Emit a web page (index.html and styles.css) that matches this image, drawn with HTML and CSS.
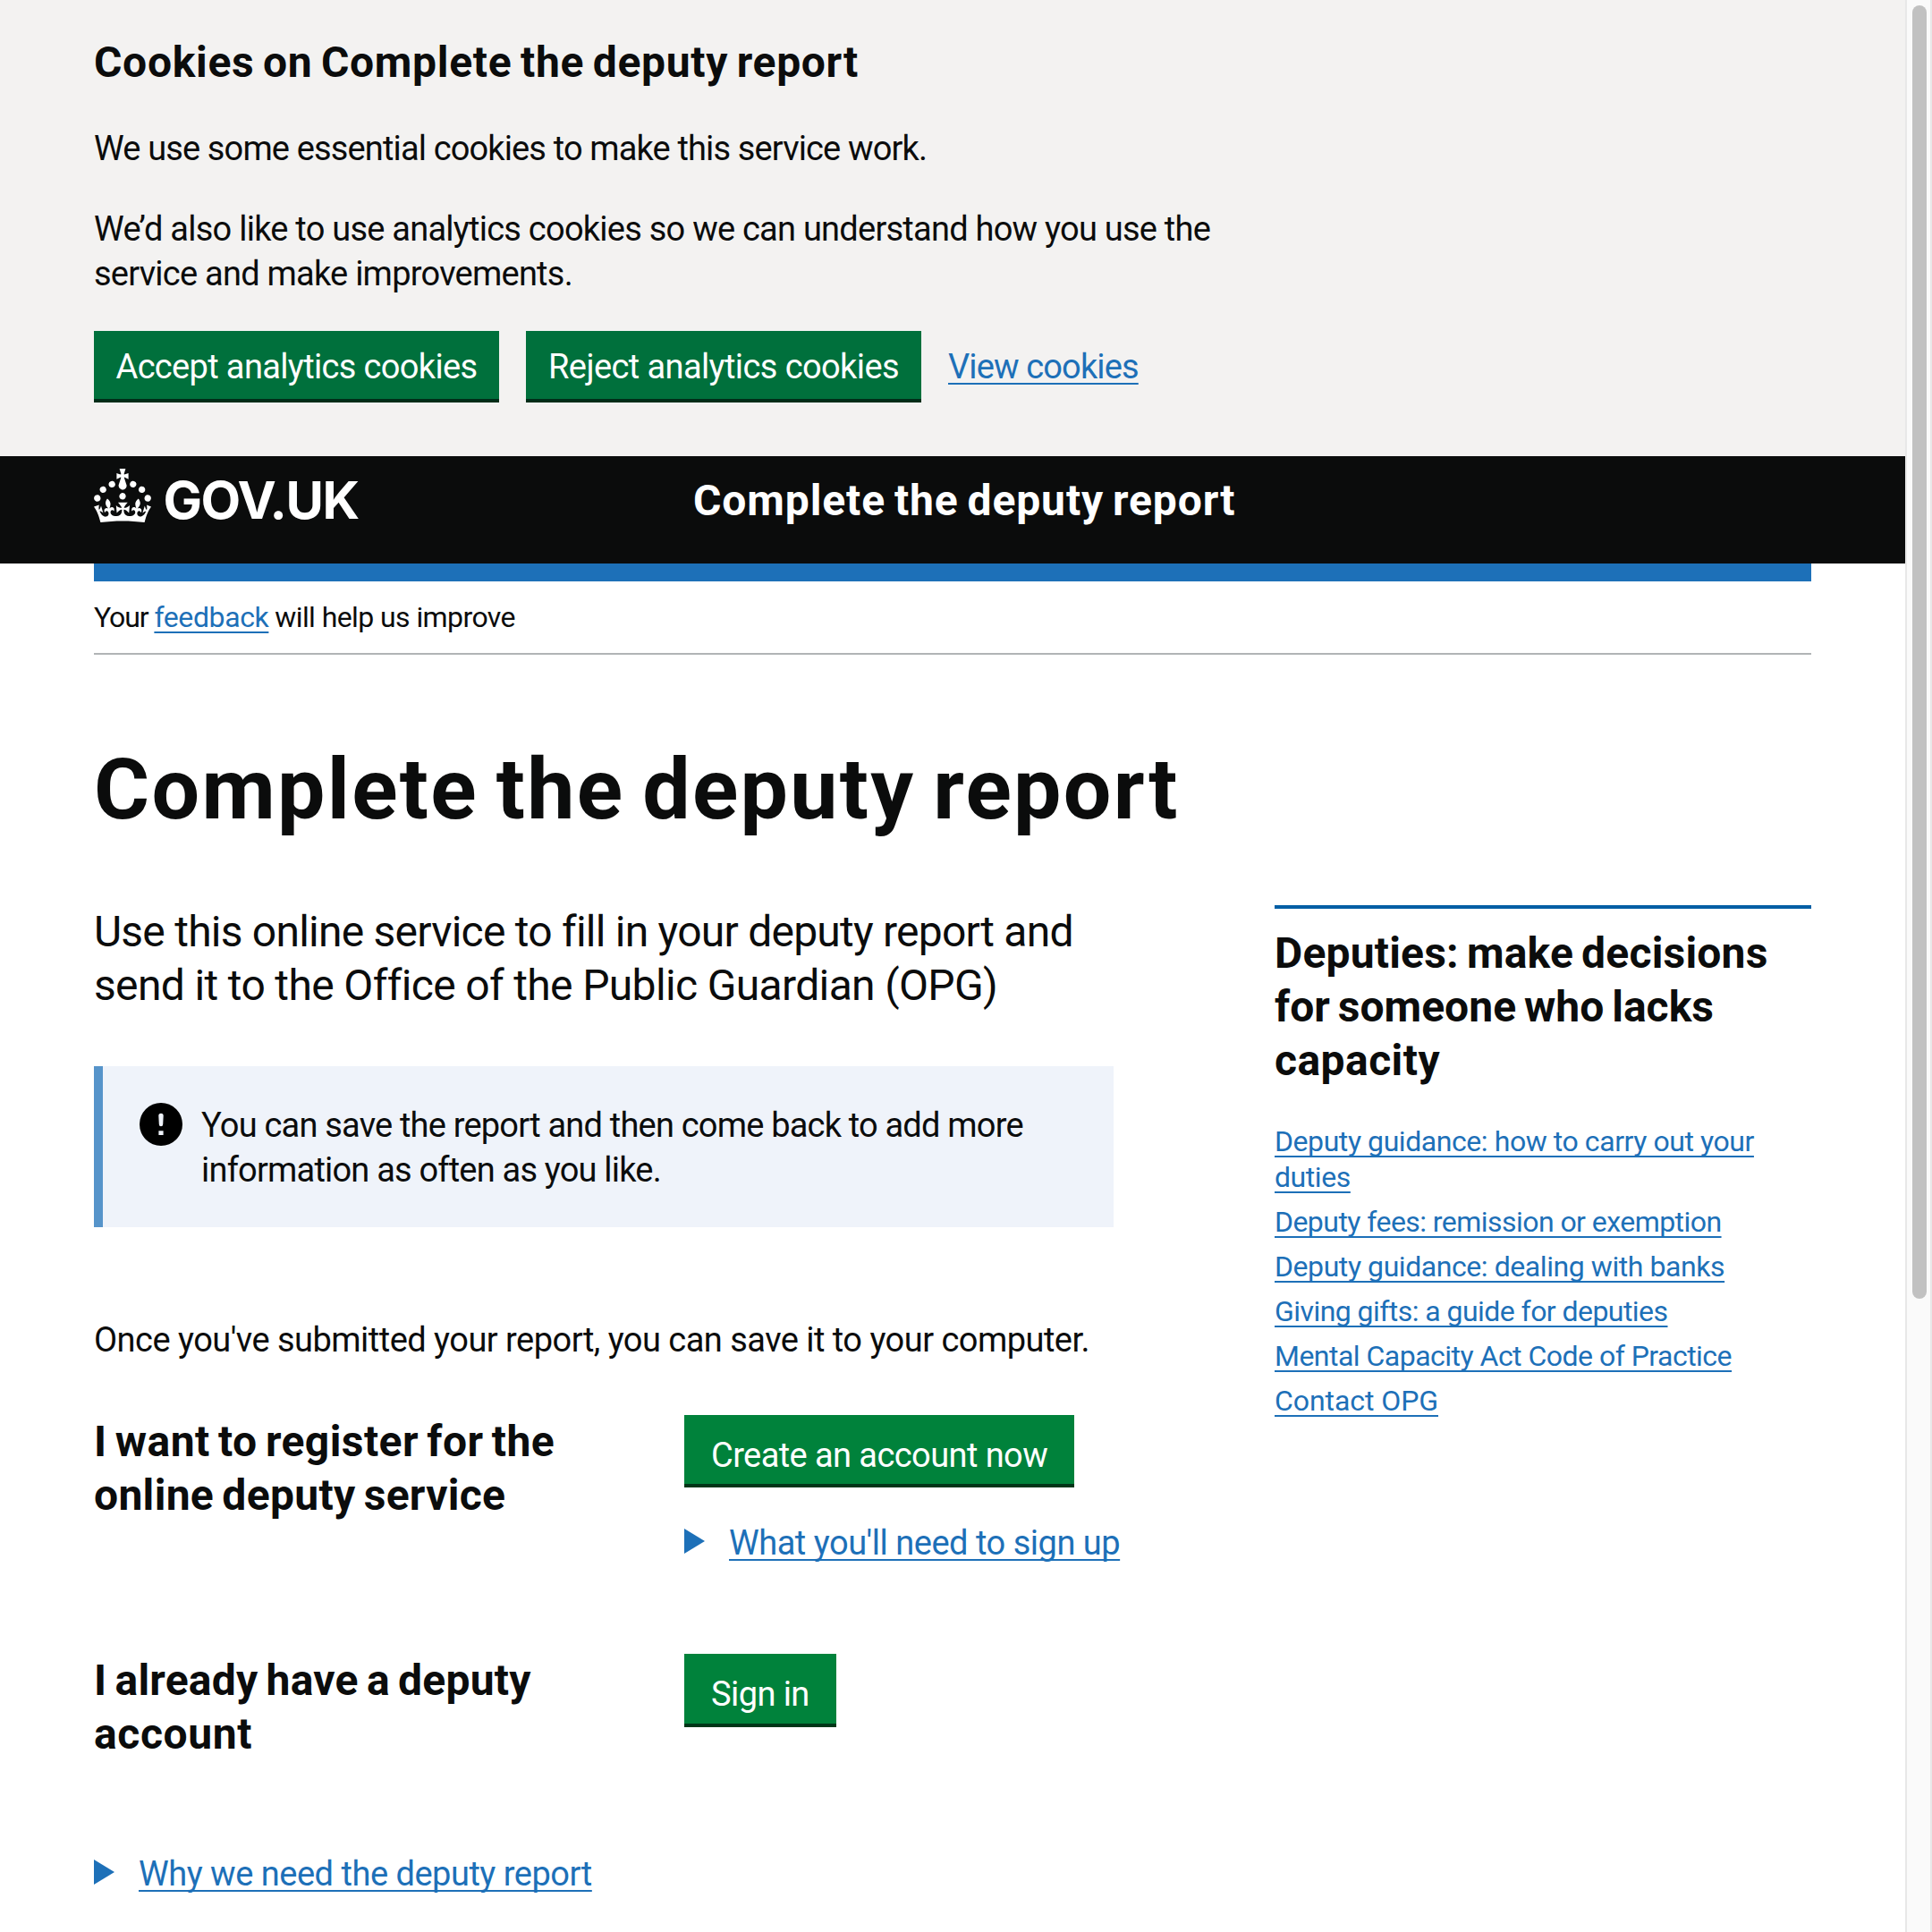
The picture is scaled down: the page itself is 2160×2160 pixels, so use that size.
FILE: index.html
```html
<!DOCTYPE html>
<html lang="en">
<head>
<meta charset="utf-8">
<title>Complete the deputy report</title>
<link rel="stylesheet" href="styles.css">
</head>
<body>
<div class="viewport">
  <div class="page">
    <section class="cookie-banner">
      <h2 class="heading-m ls-cookies">Cookies on Complete the deputy report</h2>
      <p class="body ls-g">We use some essential cookies to make this service work.</p>
      <p class="body ls-f">We’d also like to use analytics cookies so we can understand how you use the<br>service and make improvements.</p>
      <div class="button-group">
        <button class="button button-accept">Accept analytics cookies</button>
        <button class="button button-reject">Reject analytics cookies</button>
        <a class="link ls-g" href="#">View cookies</a>
      </div>
    </section>

    <header class="header">
      <svg class="logo" width="300" height="80" viewBox="0 0 300 80" role="img" aria-label="GOV.UK">
        <g transform="scale(2)" fill="#fff">
          <path d="M22.6 10.4c-1 .4-2-.1-2.4-1-.4-.9.1-2 1-2.4.9-.4 2 .1 2.4 1s-.1 2-1 2.4m-5.9 6.7c-.9.4-2-.1-2.4-1-.4-.9.1-2 1-2.4.9-.4 2 .1 2.4 1s-.1 2-1 2.4m10.8-3.7c-1 .4-2-.1-2.4-1-.4-.9.1-2 1-2.4.9-.4 2 .1 2.4 1s0 2-1 2.4m3.3 4.8c-1 .4-2-.1-2.4-1-.4-.9.1-2 1-2.4.9-.4 2 .1 2.4 1s-.1 2-1 2.4M17 4.7l2.3 1.2V2.5l-2.3.7-.2-.2.9-3h-3.4l.9 3-.2.2c-.1.1-2.3-.7-2.3-.7v3.4L15 4.7c.1.1.1.2.2.2l-1.3 4c-.1.2-.1.4-.1.6 0 1.1.8 2 1.9 2.2h.7c1-.2 1.9-1.1 1.9-2.1 0-.2 0-.4-.1-.6l-1.3-4c-.1-.2 0-.2.1-.3m-7.6 5.7c.9.4 2-.1 2.4-1 .4-.9-.1-2-1-2.4-.9-.4-2 .1-2.4 1s0 2 1 2.4m-5 3c.9.4 2-.1 2.4-1 .4-.9-.1-2-1-2.4-.9-.4-2 .1-2.4 1s.1 2 1 2.4m-3.2 4.8c.9.4 2-.1 2.4-1 .4-.9-.1-2-1-2.4-.9-.4-2 .1-2.4 1s0 2 1 2.4m14.8 11c4.4 0 8.6.3 12.3.8 1.1-4.5 2.4-7 3.7-8.8l-2.5-.9c.2 1.3.3 1.9 0 2.7-.4-.4-.8-1.1-1.1-2.3l-1.2 4c.7-.5 1.3-.8 2-.9-1.1 2.5-2.6 3.1-3.5 3-1.1-.2-1.7-1.2-1.5-2.1.3-1.2 1.5-1.5 2.1-.1 1.1-2.3-.8-3-2-2.3 1.9-1.9 2.1-3.5.6-5.6-2.1 1.6-2.1 3.2-1.2 5.5-1.2-1.4-3.2-.6-2.5 1.6.9-1.4 2.1-.5 1.9.8-.2 1.1-1.7 2.1-3.5 1.9-2.7-.2-2.9-2.1-2.9-3.6.7-.1 1.9.5 2.9 1.9l.4-4.3c-1.1 1.1-2.1 1.4-3.2 1.4.4-1.2 2.1-3 2.1-3h-5.4s1.7 1.9 2.1 3c-1.1 0-2.1-.2-3.2-1.4l.4 4.3c1-1.4 2.2-2 2.9-1.9-.1 1.5-.2 3.4-2.9 3.6-1.9.2-3.4-.8-3.5-1.9-.2-1.3 1-2.2 1.9-.8.7-2.3-1.2-3-2.5-1.6.9-2.2.9-3.9-1.2-5.5-1.5 2-1.3 3.7.6 5.6-1.2-.7-3.1 0-2 2.3.6-1.4 1.8-1.1 2.1.1.2.9-.3 1.9-1.5 2.1-.9.2-2.4-.5-3.5-3 .6 0 1.2.3 2 .9l-1.2-4c-.3 1.1-.7 1.9-1.1 2.3-.3-.8-.2-1.4 0-2.7l-2.9.9C1.3 23 2.6 25.5 3.7 30c3.7-.5 7.9-.8 12.3-.8"/>
        </g>
        <text class="logo-text" x="77.5" y="56">GOV.UK</text>
      </svg>
      <div class="heading-m service-name">Complete the deputy report</div>
    </header>

    <div class="container">
      <div class="phase-banner"><span class="ls-your">Your </span><a class="link ls-feedback" href="#">feedback</a><span class="ls-your"> </span>will help us improve</div>

      <h1 class="heading-xl">Complete the deputy report</h1>

      <div class="columns">
        <main class="main">
          <p class="lead"><span class="ls-h">Use this online service to fill in your deputy report and</span><br>send it to the Office of the Public Guardian (OPG)</p>

          <div class="notice">
            <svg class="notice-icon" width="48" height="48" viewBox="0 0 48 48" aria-hidden="true">
              <circle cx="24" cy="24" r="24" fill="#000"/>
              <path d="M21.3 14.5a2.7 2.7 0 0 1 5.4 0l-.5 9.5a2.2 2.2 0 0 1-4.4 0zM21.4 31.2h5.2v4.8h-5.2z" fill="#eff3fa"/>
            </svg>
            <p class="body ls-notice">You can save the report and then come back to add more<br>information as often as you like.</p>
          </div>

          <p class="body after-notice">Once you've submitted your report, you can save it to your computer.</p>

          <div class="row row-register">
            <h2 class="heading-m"><span class="ls-a">I want to register for the</span><br><span class="ls-online">online deputy service</span></h2>
            <div class="actions">
              <button class="button button-start">Create an account now</button>
              <div class="details">
                <svg width="23" height="28" viewBox="0 0 23 28" aria-hidden="true"><path d="M0 0 23 14 0 28z" fill="#1d70b8"/></svg>
                <a class="link" href="#">What you'll need to sign up</a>
              </div>
            </div>
          </div>

          <div class="row row-signin">
            <h2 class="heading-m"><span class="ls-b">I already have a deputy</span><br><span class="ls-c">account</span></h2>
            <div class="actions">
              <button class="button button-start button-signin">Sign in</button>
            </div>
          </div>

          <div class="details">
            <svg width="23" height="28" viewBox="0 0 23 28" aria-hidden="true"><path d="M0 0 23 14 0 28z" fill="#1d70b8"/></svg>
            <a class="link" href="#">Why we need the deputy report</a>
          </div>
        </main>

        <aside class="related">
          <h2 class="heading-m"><span class="ls-deputies">Deputies: make decisions</span><br><span class="ls-d">for someone who lacks</span><br><span class="ls-e">capacity</span></h2>
          <ul class="related-list">
            <li><a class="link ls-i" href="#">Deputy guidance: how to carry out your<br>duties</a></li>
            <li><a class="link ls-j" href="#">Deputy fees: remission or exemption</a></li>
            <li><a class="link ls-i" href="#">Deputy guidance: dealing with banks</a></li>
            <li><a class="link ls-j" href="#">Giving gifts: a guide for deputies</a></li>
            <li><a class="link ls-mental" href="#">Mental Capacity Act Code of Practice</a></li>
            <li><a class="link ls-k" href="#">Contact OPG</a></li>
          </ul>
        </aside>
      </div>
    </div>
  </div>
  <div class="scrollbar"><div class="scrollbar-thumb"></div></div>
</div>
</body>
</html>
```
FILE: styles.css
```css
* { box-sizing: border-box; }

body {
  margin: 0;
  background: #fff;
  color: #0b0c0c;
  font-family: Roboto, "Liberation Sans", sans-serif;
  overflow: hidden;
}

h1, h2, p, ul { margin: 0; padding: 0; }
ul { list-style: none; }

.viewport { display: flex; height: 2160px; overflow: hidden; }
.page { width: 2130px; }

.body {
  margin-bottom: -1px;
  padding-top: 1px;
  font-size: 38px;
  line-height: 50px;
}

.heading-m {
  font-size: 48px;
  line-height: 60px;
  font-weight: 700;
  word-spacing: -3px;
}

.heading-xl {
  margin-top: 101px;
  font-size: 95px;
  line-height: 100px;
  font-weight: 700;
  letter-spacing: 2.3px;
  word-spacing: -6px;
}

.link {
  color: #1d70b8;
  text-decoration: underline;
  text-decoration-thickness: 2px;
  text-underline-offset: 5px;
  text-decoration-skip-ink: none;
}

/* Cookie banner */
.cookie-banner {
  display: flex;
  flex-direction: column;
  gap: 40px;
  height: 510px;
  padding: 40px 105px 0;
  background: #f3f2f1;
}

.button-group {
  display: flex;
  font-size: 38px;
  line-height: 50px;
}
.button-group .link { margin: 15px 0 0 30px; }

.button {
  display: flex;
  justify-content: center;
  height: 80px;
  padding: 15px 0 0;
  border: 0;
  border-bottom: 4px solid #002d18;
  background: #00703c;
  color: #fff;
  font: 400 38px/50px Roboto, "Liberation Sans", sans-serif;
  white-space: nowrap;
}
.button-accept { width: 453px; margin-right: 30px; letter-spacing: -.648px; }
.button-reject { width: 442px; letter-spacing: -.592px; }

.button-start {
  align-self: flex-start;
  height: 81px;
  padding: 20px 30px 0;
  border-color: #003618;
  background: #00823b;
  letter-spacing: -.58px;
}
.button-signin { height: 82px; }

/* Header */
.header {
  display: flex;
  height: 120px;
  padding: 14px 105px 0;
  background: #0b0c0c;
  color: #fff;
}
.logo { flex: none; }
.logo-text {
  font: 700 58px Inter, "Liberation Sans", sans-serif;
  letter-spacing: -1.5px;
  fill: #fff;
}
.service-name { margin: 6px 0 0 370px; letter-spacing: .9px; }

.container {
  width: 1920px;
  margin: 0 105px;
  border-top: 20px solid #1d70b8;
}

.phase-banner {
  height: 82px;
  padding-top: 20px;
  border-bottom: 2px solid #b1b4b6;
  font-size: 32px;
  line-height: 40px;
  letter-spacing: -.58px;
}

/* Main content */
.columns {
  display: flex;
  justify-content: space-between;
  margin-top: 79px;
}
.main { width: 1180px; }
.lead { font-size: 48px; line-height: 60px; letter-spacing: -.65px; }

.notice {
  display: flex;
  gap: 21px;
  width: 1140px;
  height: 180px;
  margin-top: 60px;
  padding: 40px 0 0 41px;
  border-left: 10px solid #5694ca;
  background: #eff3fa;
}
.notice-icon { flex: none; margin-top: 1px; }

.after-notice { margin-top: 100px; letter-spacing: -.526px; }

.row { display: grid; grid-template-columns: 660px 1fr; }
.row-register { height: 267px; margin-top: 60px; }
.row-signin { height: 220px; }
.actions { display: flex; flex-direction: column; gap: 37px; }

.details {
  display: flex;
  align-items: flex-start;
  gap: 27px;
  font-size: 38px;
  line-height: 50px;
  letter-spacing: -.485px;
}
.details svg { flex: none; margin-top: 9px; }
.main > .details { padding-top: 1px; }

/* Related links */
.related {
  width: 600px;
  padding-top: 20px;
  border-top: 4px solid #005ea5;
}
.related-list {
  display: flex;
  flex-direction: column;
  gap: 10px;
  margin-top: 40px;
  font-size: 32px;
  line-height: 40px;
}

/* Scrollbar */
.scrollbar {
  width: 30px;
  padding: 6px 4px 0 6px;
  border: solid #e8e8e8;
  border-width: 0 2px;
  background: #fafafa;
}
.scrollbar-thumb {
  width: 16px;
  height: 1446px;
  border-radius: 8px;
  background: #c1c1c1;
}

/* Tracking */
.ls-a { letter-spacing: .43px; }
.ls-b { letter-spacing: .24px; }
.ls-c { letter-spacing: .596px; }
.ls-d { letter-spacing: .01px; }
.ls-e { letter-spacing: .438px; }
.ls-f { letter-spacing: -.76px; }
.ls-g { letter-spacing: -.86px; }
.ls-h { letter-spacing: -.765px; }
.ls-i { letter-spacing: -.433px; }
.ls-j { letter-spacing: -.55px; }
.ls-k { letter-spacing: -.071px; }
.ls-mental { letter-spacing: -.52px; }
.ls-online { letter-spacing: .31px; }
.ls-deputies { letter-spacing: .19px; }
.ls-cookies { letter-spacing: .69px; }
.ls-notice { letter-spacing: -.8px; }
.ls-your { letter-spacing: -1.1px; }
.ls-feedback { letter-spacing: -.385px; }
```
